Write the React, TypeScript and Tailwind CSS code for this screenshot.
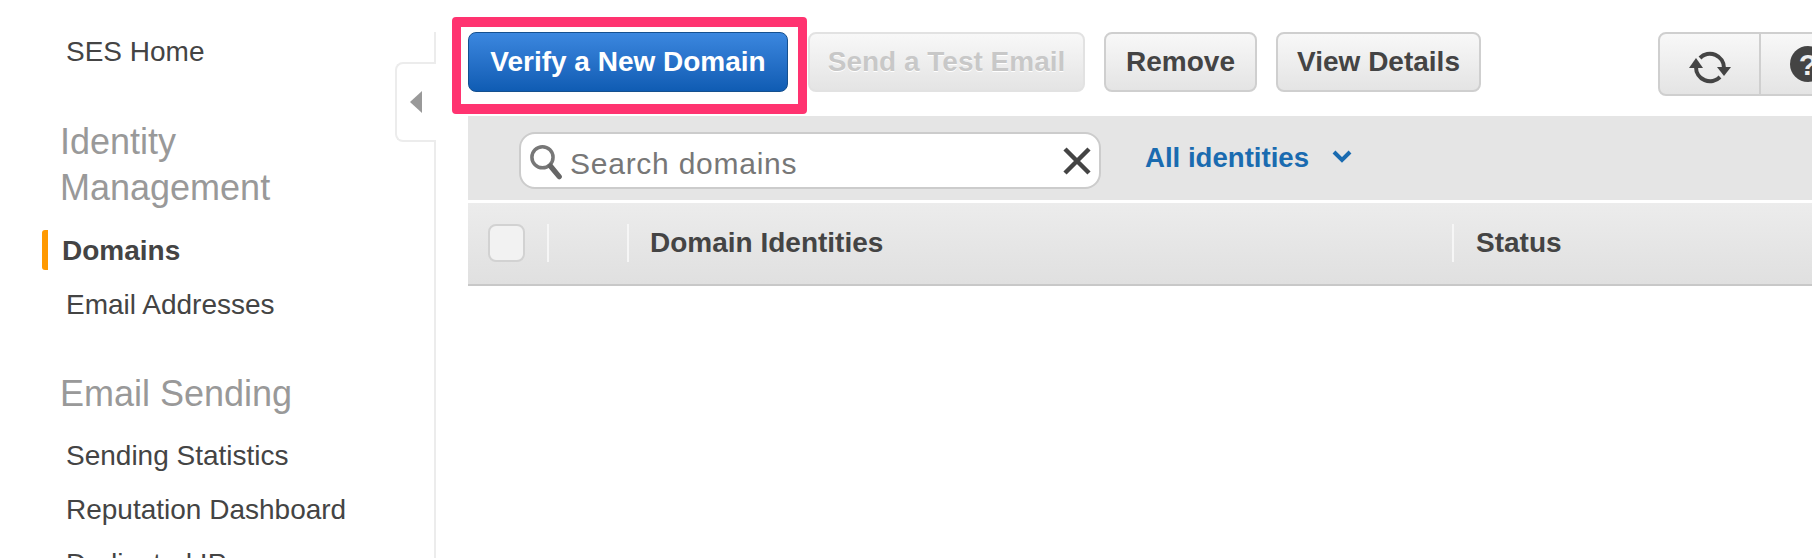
const font = "font-['Liberation_Sans',Arial,sans-serif]";

function SideLink({ label }: { label: string }) {
  return <div className="pl-[66px] text-[28px] leading-[54px] text-[#444]">{label}</div>;
}

function ToolButton({ label, className }: { label: string; className: string }) {
  return (
    <button
      className={`h-[60px] rounded-[8px] border-2 text-[28px] font-bold bg-gradient-to-b from-[#f8f8f8] to-[#e4e4e4] ${className}`}
    >
      {label}
    </button>
  );
}

export default function App() {
  return (
    <div className={`${font} flex h-[558px] w-[1812px] overflow-hidden bg-white`}>
      {/* nav */}
      <aside className="relative w-[436px] shrink-0">
        <div className="pt-[25px]">
          <SideLink label="SES Home" />
          <h3 className="mt-[40px] pl-[60px] text-[36px] leading-[46px] font-normal text-[#999]">
            Identity
            <br />
            Management
          </h3>
          <div className="relative mt-[13px] pl-[62px] text-[28px] leading-[54px] font-bold text-[#444]">
            <span className="absolute left-[42px] top-[6px] h-[40px] w-[6px] rounded-l-[3px] bg-[#f90]" />
            Domains
          </div>
          <SideLink label="Email Addresses" />
          <h3 className="mt-[39px] pl-[60px] text-[36px] leading-[46px] font-normal text-[#999]">Email Sending</h3>
          <div className="mt-[12px]">
            <SideLink label="Sending Statistics" />
            <SideLink label="Reputation Dashboard" />
            <SideLink label="Dedicated IPs" />
          </div>
        </div>
        <div className="absolute bottom-0 right-0 top-[32px] w-[2px] bg-[#ececec]" />
        <div className="absolute right-0 top-[62px] flex h-[80px] w-[41px] items-center rounded-l-[8px] border-y-2 border-l-2 border-[#ececec] bg-white pl-[13px]">
          <span className="h-0 w-0 border-y-[11px] border-r-[12px] border-y-transparent border-r-[#999]" />
        </div>
      </aside>

      <main className="relative min-w-0 flex-1 pl-[32px]">
        {/* toolbar */}
        <div className="flex h-[116px] items-start pt-[32px]">
          <button className="mr-[20px] h-[60px] w-[320px] rounded-[8px] border border-[#15508f] bg-gradient-to-b from-[#3b87df] to-[#0f5cb3] text-[28px] font-bold text-white">
            Verify a New Domain
          </button>
          <div className="flex gap-[19px]">
            <ToolButton
              label="Send a Test Email"
              className="w-[277px] border-[#e2e2e2] text-[#c8c8c8] [text-shadow:0_1px_0_#fff]"
            />
            <ToolButton label="Remove" className="w-[153px] border-[#cfcfcf] text-[#444]" />
            <ToolButton label="View Details" className="w-[205px] border-[#cfcfcf] text-[#444]" />
          </div>
          <div className="ml-auto mr-[-45px] flex h-[64px] rounded-[8px] border-2 border-[#cfcfcf] bg-gradient-to-b from-[#f8f8f8] to-[#e4e4e4]">
            <div className="flex w-[101px] items-center justify-center border-r-2 border-[#cfcfcf]">
              <svg viewBox="0 0 42 36" className="mt-[8px] h-[36px] w-[42px]" fill="none" stroke="#444" strokeWidth="4">
                <path d="M11 8A14 14 0 0 1 35 18" />
                <path d="M7 17A14 14 0 0 0 31 27" />
                <path d="M28 17h14l-7 9z" fill="#444" stroke="none" />
                <path d="M0 18h14L7 8z" fill="#444" stroke="none" />
              </svg>
            </div>
            <div className="flex w-[94px] items-center justify-center">
              <span className="flex h-[36px] w-[36px] items-center justify-center rounded-full bg-[#444] text-[30px] font-bold text-[#eee]">
                ?
              </span>
            </div>
          </div>
        </div>

        {/* filter bar */}
        <div className="flex h-[84px] items-start bg-[#e5e5e5] pl-[51px] pt-[16px]">
          <div className="flex h-[57px] w-[582px] items-center rounded-[16px] border-2 border-[#ccc] bg-white pl-[8px] pr-[8px]">
            <svg viewBox="0 0 38 42" className="mt-[4px] h-[37px] w-[34px] shrink-0" fill="none">
              <circle cx="15" cy="15" r="12" stroke="#777" strokeWidth="4" />
              <path d="M24 25l10 12" stroke="#666" strokeWidth="6" strokeLinecap="round" />
            </svg>
            <span className="ml-[7px] mt-[5px] text-[30px] tracking-[0.75px] text-[#777]">Search domains</span>
            <svg viewBox="0 0 28 28" className="ml-auto h-[28px] w-[28px]" stroke="#444" strokeWidth="4.5">
              <path d="M2 2l24 24M26 2L2 26" />
            </svg>
          </div>
          <span className="ml-[44px] mt-[10px] text-[27.6px] font-bold leading-[32px] text-[#1a6bb0]">All identities</span>
          <svg viewBox="0 0 20 13" className="ml-[23px] mt-[18px] h-[13px] w-[20px]" fill="none" stroke="#1a6bb0" strokeWidth="4">
            <path d="M2 2l8 8 8-8" />
          </svg>
        </div>

        {/* table head */}
        <div className="mt-[3px] flex h-[83px] items-center border-b-2 border-[#c8c8c8] bg-gradient-to-b from-[#ececec] to-[#e0e0e0] pb-[1px] text-[28px] font-bold text-[#444]">
          <span className="ml-[20px] h-[38px] w-[37px] rounded-[8px] border-2 border-[#d2d2d2] bg-[#f2f2f2]" />
          <span className="ml-[22px] h-[38px] w-[2px] bg-[#f6f6f6]" />
          <span className="ml-[78px] h-[38px] w-[2px] bg-[#f6f6f6]" />
          <span className="ml-[21px] w-[802px]">Domain Identities</span>
          <span className="h-[38px] w-[2px] bg-[#f6f6f6]" />
          <span className="ml-[22px]">Status</span>
        </div>

        {/* highlight around the primary action */}
        <div className="pointer-events-none absolute left-[16px] top-[17px] h-[97px] w-[355px] rounded-[4px] border-x-[9px] border-y-[10px] border-[#ff3370]" />
      </main>
    </div>
  );
}
